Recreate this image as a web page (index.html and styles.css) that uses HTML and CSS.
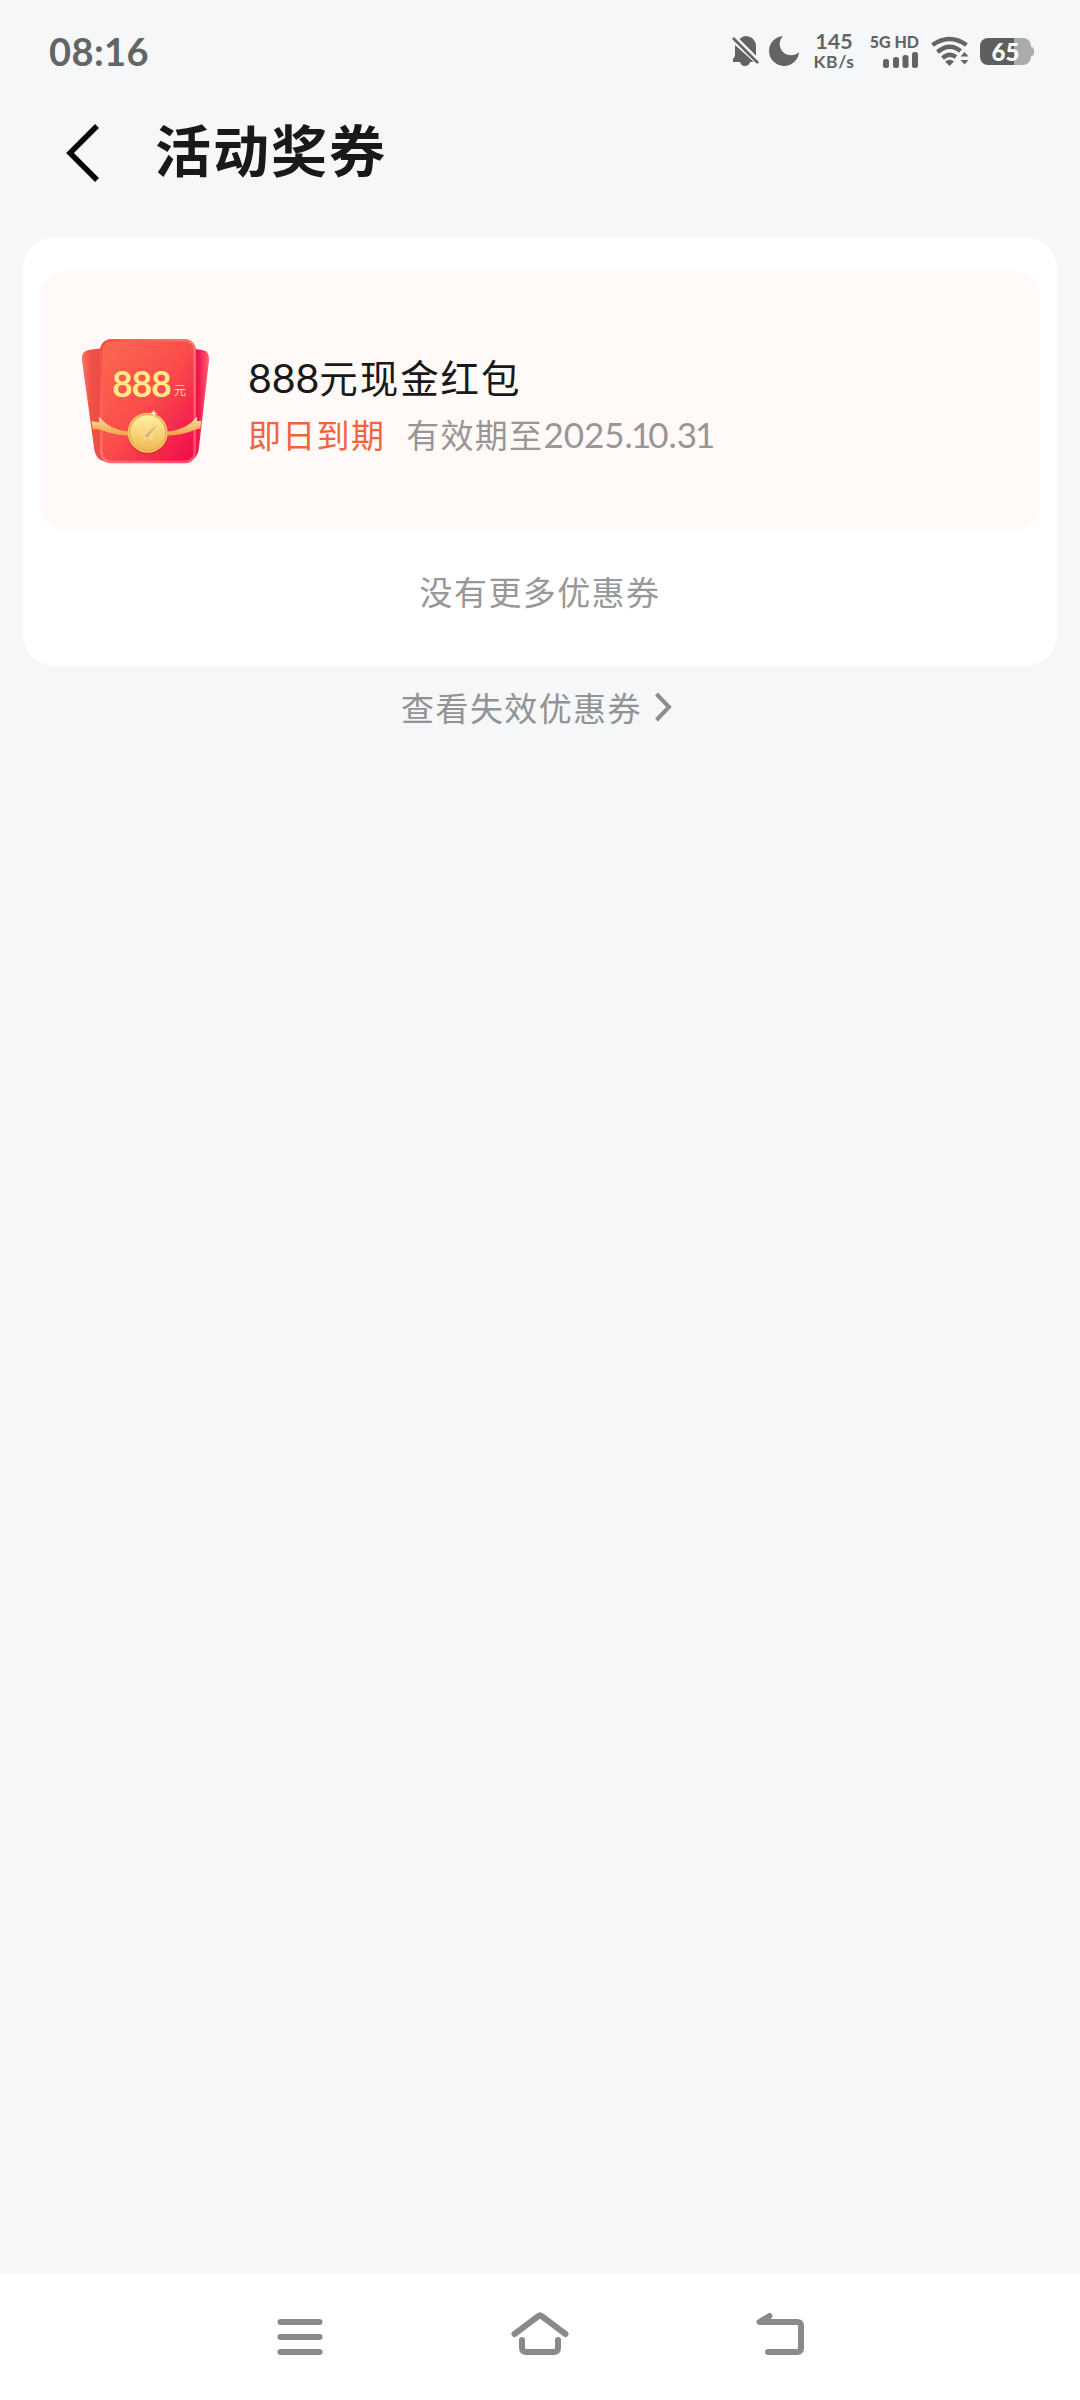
FILE: index.html
```html
<!DOCTYPE html>
<html lang="zh-CN">
<head>
<meta charset="utf-8">
<title>活动奖券</title>
<link rel="stylesheet" href="styles.css">
</head>
<body>
<div class="screen">
  <div class="status">
    <div class="clock">08:16</div>
    <div class="indicators">
      <svg class="bell" width="28" height="32" viewBox="0 0 28 32">
        <path d="M7 5Q10 1 14 1Q24 2 24 12V21L7 4ZM3 10L22 27H18Q17 31 13 31Q9 31 8 27H1V24L3 21Z" fill="#636565"/>
        <path d="M1 2L27 28" stroke="#f5f7f9" stroke-width="6"/>
        <path d="M1 3L26 28" stroke="#636565" stroke-width="2.6"/>
      </svg>
      <svg class="moon" width="32" height="32" viewBox="0 0 32 32"><path d="M15 1A15 15 0 1 0 31 17A11 11 0 0 1 15 1Z" fill="#636565"/></svg>
      <div class="speed"><span class="rate">145</span><span class="unit">KB/s</span></div>
      <div class="cell">
        <span class="net">5G HD</span>
        <svg width="37" height="18" viewBox="0 0 37 18" fill="#636565"><rect x="1" y="8" width="6" height="9" rx="2.5"/><rect x="11" y="6" width="6" height="11" rx="2.5"/><rect x="20.500" y="4" width="6" height="13" rx="2.5"/><rect x="30" y="1" width="6" height="16" rx="2.500"/></svg>
      </div>
      <svg class="wifi" width="38" height="31" viewBox="0 0 38 31">
        <g fill="none" stroke="#636565" stroke-width="4.500"><path d="M1.500 9Q18.500-3 35.500 9"/><path d="M6.500 16Q18.500 6 29.500 15"/><path d="M11.500 22Q18.500 16 25 21"/></g>
        <path d="M14 25.500Q18.500 22 23 25.500L18.500 30Z" fill="#636565"/>
        <path d="M29.500 20.500L33.500 16L37.500 20.500ZM29.500 24L33.500 28.500L37.500 24Z" fill="#636565"/>
      </svg>
      <div class="battery"><span>65</span></div>
    </div>
  </div>

  <header class="header">
    <svg width="34" height="60" viewBox="0 0 34 60"><path d="M31 3L4 30L31 57" fill="none" stroke="#050505" stroke-width="5.500"/></svg>
    <h1>活动奖券</h1>
  </header>

  <main class="panel">
    <article class="coupon">
      <svg class="envelope" width="140" height="133" viewBox="45 75 420 399">
        <defs>
          <linearGradient id="front" x1="0" y1="0" x2="1" y2="1"><stop offset="0" stop-color="#fa6a50"/><stop offset=".5" stop-color="#fb4c4c"/><stop offset="1" stop-color="#f0064b"/></linearGradient>
          <linearGradient id="edge" x1="0" y1="0" x2="1" y2="1"><stop offset="0" stop-color="#fa4a43"/><stop offset=".5" stop-color="#ff7770"/><stop offset="1" stop-color="#ff4d72"/></linearGradient>
          <linearGradient id="left" x1="0" y1="0" x2="1" y2="0"><stop offset="0" stop-color="#ff726a"/><stop offset=".25" stop-color="#ef5148"/><stop offset="1" stop-color="#e7443c"/></linearGradient>
          <linearGradient id="right" x1="0" y1="0" x2="1" y2="0"><stop offset="0" stop-color="#e8174b"/><stop offset=".7" stop-color="#ee174d"/><stop offset="1" stop-color="#ff6475"/></linearGradient>
          <linearGradient id="gold" x1="0" y1="0" x2="0" y2="1"><stop offset="0" stop-color="#fff1a5"/><stop offset="1" stop-color="#f2b851"/></linearGradient>
          <linearGradient id="ribbon" x1="0" y1="0" x2="0" y2="1"><stop offset="0" stop-color="#ffe1a0"/><stop offset="1" stop-color="#eda345"/></linearGradient>
        </defs>
        <path d="M130 114L86 120Q62 124 66 151L103 420Q108 450 136 455H170V114Z" fill="url(#left)"/>
        <path d="M380 114L427 120Q450 124 447 151L416 420Q411 448 386 453H340V114Z" fill="url(#right)"/>
        <path d="M95 334L126 338V360L98 357ZM395 335L424 332L421 356L395 360Z" fill="url(#ribbon)"/>
        <rect x="121" y="88" width="286" height="371" rx="32" fill="url(#front)"/>
        <rect x="124" y="91" width="280" height="365" rx="29" fill="none" stroke="url(#edge)" stroke-width="7"/>
        <path d="M117 320Q148 359 206 365V377Q157 375 116 356ZM411 320Q380 359 322 365V377Q371 375 412 356Z" fill="url(#ribbon)"/>
        <ellipse cx="263" cy="378" rx="59" ry="55" fill="#c42c27" opacity=".45"/>
        <circle cx="263" cy="368" r="60" fill="#f7c763"/>
        <circle cx="263" cy="368" r="54" fill="url(#gold)" stroke="#dfa549" stroke-width="3"/>
        <path d="M229 376L292 344L277 394L263 383L250 393L252 378Z" fill="#f5d98c"/><path d="M252 378L292 344L263 383Z" fill="#dfb768"/>
        <path d="M281 299L284 307L292 310L284 313L281 321L278 313L270 310L278 307Z" fill="#fff7cf"/>
        <text class="amount" x="157" y="260" textLength="178">888</text>
        <text class="yuan" x="341" y="256">元</text>
      </svg>
      <div class="info">
        <h2><span class="digits">888</span>元现金红包</h2>
        <p><span class="due">即日到期</span><span class="valid">有效期至<span class="digits">2025.<i>1</i>0.3<i>1</i></span></span></p>
      </div>
    </article>
    <p class="empty">没有更多优惠券</p>
  </main>

  <a class="expired">查看失效优惠券<svg width="18" height="30" viewBox="0 0 18 30"><path d="M2.500 2L15 15L2.500 28" fill="none" stroke="#8b8c8d" stroke-width="4"/></svg></a>

  <nav class="nav">
    <svg width="60" height="60" viewBox="0 0 60 60"><path d="M10.500 15H49.500M10.500 30H49.500M10.500 45H49.500"/></svg>
    <svg width="60" height="60" viewBox="0 0 60 60"><path d="M4.500 27L28.500 9Q30 7.500 31.500 9L55.500 27M12 33V41Q12 45 16.500 45H43.500Q48 45 48 41V33"/></svg>
    <svg width="60" height="60" viewBox="0 0 60 60"><path d="M19.500 9L9.500 15H47Q51 15 51 19V41Q51 45 47 45H18"/></svg>
  </nav>
</div>
</body>
</html>
```

FILE: styles.css
```css
* { box-sizing: border-box; margin: 0; padding: 0; }
body { background: #f5f7f9; font-family: "Noto Sans CJK SC", sans-serif; }
.screen { width: 1080px; height: 2400px; display: flex; flex-direction: column; overflow: hidden; }
.status { height: 100px; padding: 2px 46px 0 49px; display: flex; justify-content: space-between; align-items: center; font-family: Lato, sans-serif; font-weight: 700; color: #636565; }
.clock { font-size: 38px; letter-spacing: .4px; line-height: 50px; }
.indicators { display: flex; height: 44px; align-items: center; }
.moon { margin-left: 8px; }
.speed { width: 46px; margin-left: 11px; display: flex; flex-direction: column; align-items: center; }
.rate { font-size: 21.5px; line-height: 21px; }
.unit { font-size: 17.5px; line-height: 19px; letter-spacing: .6px; }
.cell { width: 50px; margin-left: 12px; display: flex; flex-direction: column; align-items: flex-end; }
.net { font-size: 16px; line-height: 18px; font-weight: 900; white-space: nowrap; }
.wifi { margin-left: 12px; }
.battery { position: relative; width: 51px; height: 27px; margin: 0 3px 0 11px; border-radius: 8px; background: linear-gradient(90deg, #5e5f5f 66%, #aaabac 66%); display: flex; justify-content: center; align-items: center; color: #fff; font-size: 24px; font-weight: 900; }
.battery::after { content: ""; position: absolute; left: 51px; top: 9px; width: 3px; height: 9px; border-radius: 0 3px 3px 0; background: #aaabac; }
.header { height: 137px; padding-left: 66px; display: flex; align-items: flex-start; }
.header svg { margin-top: 23px; }
.header h1 { margin: 8px 0 0 55px; font-size: 56px; line-height: 80px; font-weight: 700; letter-spacing: 2px; color: #191919; }
.panel { width: 1034px; height: 429px; margin: 0 auto; padding: 34px 17px 0; border-radius: 32px; background: #fff; }
.coupon { height: 259px; padding-left: 35px; display: flex; align-items: center; border-radius: 26px; background: #fff9f7; }
.envelope { display: block; margin-top: 2px; }
.amount { font: 700 106px Lato, sans-serif; fill: #ffea87; }
.yuan { font: 400 37px "Noto Sans CJK SC", sans-serif; fill: #ffd3a4; }
.info { margin-left: 33px; padding-top: 6px; }
.info h2 { font-size: 38.5px; line-height: 59px; font-weight: 400; letter-spacing: 1.900px; color: #191919; white-space: nowrap; }
.info h2 .digits { font-size: 41px; letter-spacing: 0; }
.info p { font-size: 33px; line-height: 54px; letter-spacing: 1.300px; white-space: nowrap; }
.digits { font-family: Lato, sans-serif; }
.digits i { font-style: normal; margin: 0 -3px 0 -2px; }
.due { color: #f0643e; }
.valid { margin-left: 21px; color: #989696; }
.valid .digits { font-size: 35px; letter-spacing: 0; }
.empty { text-align: center; font-size: 33px; line-height: 50px; margin-top: 36px; letter-spacing: 1.400px; color: #989898; }
.expired { display: flex; justify-content: center; align-items: center; height: 50px; margin-top: 16px; padding-right: 7px; font-size: 33px; letter-spacing: 1.400px; color: #929394; }
.expired svg { margin-left: 12px; }
.nav { margin-top: auto; height: 126px; padding: 33px 270px 0; display: flex; justify-content: space-between; background: #fff; }
.nav svg { fill: none; stroke: #8a8a8a; stroke-width: 6; stroke-linecap: round; stroke-linejoin: round; }
```
